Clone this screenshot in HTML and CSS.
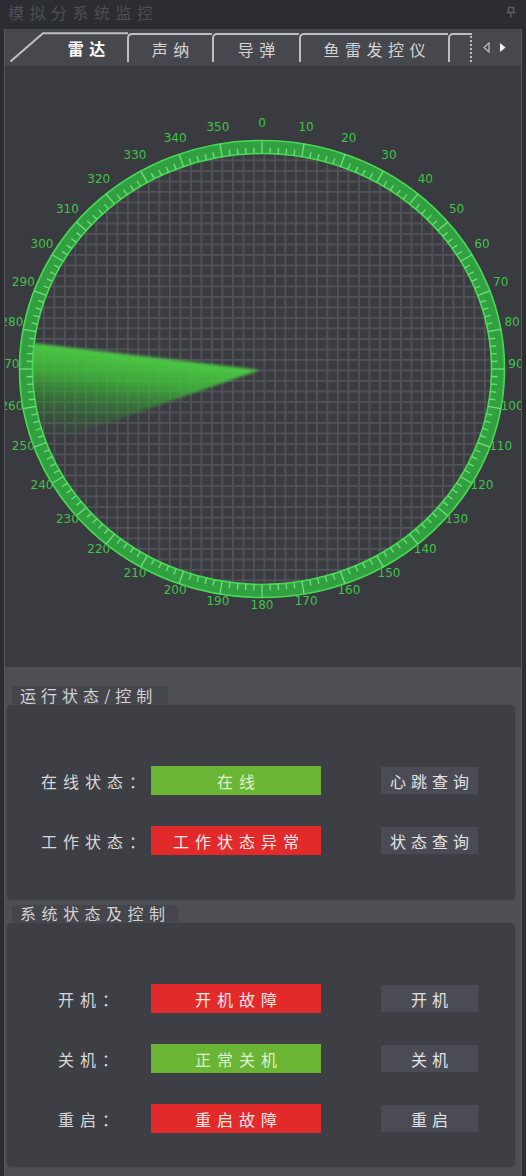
FILE: index.html
```html
<!DOCTYPE html>
<html lang="zh-CN">
<head>
<meta charset="utf-8">
<title>模拟分系统监控</title>
<link rel="stylesheet" href="styles.css">
</head>
<body>
<div class="window">
  <div class="titlebar">
    <span class="title">模拟分系统监控</span>
    <svg class="pin" width="10" height="12" viewBox="0 0 10 12"><path d="M2.5 1.5h5v5h-5z M0.5 6.5h9 M5 6.5v5" fill="none" stroke="#5c5e64" stroke-width="1.4"/></svg>
  </div>
  <div class="frame">
    <div class="tabbar">
      <div class="tab tab-first">
        <svg class="tab-shape" width="119" height="30" viewBox="0 0 119 30"><path d="M0.5 29.5 L33 1.2 H118" fill="none" stroke="#bdbec1" stroke-width="2"/></svg>
        <span class="tab-text">雷达</span>
      </div>
      <div class="tab tab-2"><span class="tab-text">声纳</span></div>
      <div class="tab tab-3"><span class="tab-text">导弹</span></div>
      <div class="tab tab-4"><span class="tab-text">鱼雷发控仪</span></div>
      <div class="tab tab-5"></div>
      <div class="tab-arrows">
        <svg width="7" height="11" viewBox="0 0 7 11"><path d="M6 1 L1 5.5 L6 10 Z" fill="none" stroke="#b9babd" stroke-width="1.3"/></svg>
        <svg width="7" height="11" viewBox="0 0 7 11"><path d="M1 1 L6.5 5.5 L1 10 Z" fill="#f2f2f2"/></svg>
      </div>
    </div>
    <div class="radar">
      <svg class="radar-svg" width="516" height="601" viewBox="5 66 516 601">
        <defs>
          <pattern id="grid" width="10.5" height="10.5" x="1" y="2" patternUnits="userSpaceOnUse">
            <rect width="10.5" height="10.5" fill="#3b3c42"/>
            <path d="M0 0.8 H10.5 M0.8 0 V10.5" stroke="#525359" stroke-width="1.8"/>
          </pattern>
          <linearGradient id="sweep" gradientUnits="userSpaceOnUse" x1="100" y1="350" x2="89" y2="440">
            <stop offset="0" stop-color="#4dd044" stop-opacity="0.95"/>
            <stop offset="0.3" stop-color="#40c03a" stop-opacity="0.8"/>
            <stop offset="0.65" stop-color="#30a02e" stop-opacity="0.4"/>
            <stop offset="1" stop-color="#2a8f2a" stop-opacity="0"/>
          </linearGradient>
          <filter id="soft" x="-10%" y="-20%" width="120%" height="140%">
            <feGaussianBlur stdDeviation="1.6"/>
          </filter>
        </defs>
        <rect x="5" y="66" width="516" height="601" fill="#3a3b40"/>
        <ellipse cx="262" cy="369" rx="229" ry="215" fill="url(#grid)"/>
        <path d="M260 370 L33 343 A229 215 0 0 0 44 445 Z" fill="url(#sweep)" filter="url(#soft)"/>
        <ellipse cx="262" cy="369" rx="236" ry="222" fill="none" stroke="#31a040" stroke-width="14"/>
        <ellipse cx="262" cy="369" rx="242.5" ry="228.5" fill="none" stroke="#48d854" stroke-width="1.6"/>
        <ellipse cx="262" cy="369" rx="229.5" ry="215.5" fill="none" stroke="#48d854" stroke-width="1.6"/>
        <g id="ticks" stroke="#74de7c" stroke-width="1.3"></g>
        <g id="labels" class="radar-labels"></g>
      </svg>
    </div>
    <div class="controls">
      <section class="group">
        <div class="group-title">运行状态/控制</div>
        <div class="group-body">
          <div class="row">
            <span class="label">在线状态：</span>
            <span class="status ok">在线</span>
            <span class="btn">心跳查询</span>
          </div>
          <div class="row">
            <span class="label">工作状态：</span>
            <span class="status bad">工作状态异常</span>
            <span class="btn">状态查询</span>
          </div>
        </div>
      </section>
      <section class="group group-2">
        <div class="group-title wide">系统状态及控制</div>
        <div class="group-body body-2">
          <div class="row">
            <span class="label short">开机：</span>
            <span class="status bad">开机故障</span>
            <span class="btn">开机</span>
          </div>
          <div class="row">
            <span class="label short">关机：</span>
            <span class="status ok">正常关机</span>
            <span class="btn">关机</span>
          </div>
          <div class="row">
            <span class="label short">重启：</span>
            <span class="status bad">重启故障</span>
            <span class="btn">重启</span>
          </div>
        </div>
      </section>
    </div>
  </div>
</div>
<script src="script.js"></script>
</body>
</html>
```
FILE: styles.css
```css
* { box-sizing: border-box; }
html, body { margin: 0; padding: 0; }
body {
  width: 526px;
  height: 1176px;
  overflow: hidden;
  background: #2c2d31;
  font-family: "Noto Sans CJK SC", "Noto Sans", sans-serif;
}
.window {
  width: 526px;
  height: 1176px;
  display: flex;
  flex-direction: column;
}
.titlebar {
  height: 29px;
  flex: none;
  display: flex;
  align-items: center;
  justify-content: space-between;
  padding: 0 10px 6px 8px;
}
.title {
  color: #4d4f56;
  font-size: 16px;
  line-height: 1;
  letter-spacing: 5.5px;
}
.pin { display: block; }
.frame {
  flex: 1;
  margin: 0 4px;
  border-left: 1px solid #57585d;
  border-right: 1px solid #57585d;
  background: #3a3b40;
  display: flex;
  flex-direction: column;
}
.tabbar {
  height: 37px;
  flex: none;
  background: #47484e;
  display: flex;
  align-items: flex-start;
  padding: 4px 0 0 5px;
}
.tab {
  height: 29px;
  display: flex;
  align-items: center;
  justify-content: center;
  border-top: 2px solid #bdbec1;
  border-left: 2px solid #bdbec1;
  border-top-left-radius: 5px;
  color: #d4d4d6;
  font-size: 16px;
  line-height: 1;
}
.tab-text {
  letter-spacing: 5.5px;
  padding-left: 5.5px;
}
.tab-first {
  width: 117px;
  border: none;
  border-radius: 0;
  position: relative;
  padding-left: 36px;
  color: #ffffff;
  font-weight: bold;
}
.tab-shape {
  position: absolute;
  left: 0;
  top: -1px;
}
.tab-first .tab-text { position: relative; }
.tab-2 { width: 85px; }
.tab-3 { width: 87px; }
.tab-4 { width: 149px; }
.tab-5 {
  width: 24px;
  border-right: 2px dotted #bdbec1;
}
.tab-arrows {
  height: 29px;
  display: flex;
  align-items: center;
  gap: 9px;
  margin-left: 11px;
}
.tab-arrows svg { display: block; }
.radar {
  height: 601px;
  flex: none;
}
.radar-svg { display: block; }
.radar-labels {
  font-family: "DejaVu Sans", sans-serif;
  font-size: 12px;
  fill: #3ec447;
}
.controls {
  flex: 1;
  background: #4e4f55;
  padding: 19px 5px 8px 1px;
  display: flex;
  flex-direction: column;
}
.group { display: flex; flex-direction: column; }
.group-2 { margin-top: 4px; flex: 1; }
.group-title {
  margin-left: 6px;
  width: 156px;
  height: 18px;
  background: #45464c;
  border-radius: 4px 4px 0 0;
  color: #d3d3d5;
  font-size: 16px;
  line-height: 18px;
  letter-spacing: 5px;
  padding-left: 8px;
  white-space: nowrap;
}
.group-title.wide {
  width: 166px;
  height: 17px;
  line-height: 17px;
  letter-spacing: 5.5px;
}
.group-body {
  height: 197px;
  background: #3e3f45;
  border: 1px solid #4a4b52;
  border-radius: 6px;
  padding-top: 61px;
  display: flex;
  flex-direction: column;
  gap: 31px;
}
.group-body.body-2 {
  height: auto;
  flex: 1;
  gap: 31px;
}
.row {
  height: 29px;
  display: flex;
  align-items: center;
}
.label {
  width: 144px;
  text-align: right;
  color: #d8d8da;
  font-size: 16px;
  line-height: 1;
  letter-spacing: 6px;
}
.label.short { padding-right: 27px; }
.status {
  width: 170px;
  height: 29px;
  display: flex;
  align-items: center;
  justify-content: center;
  font-size: 16px;
  line-height: 1;
  letter-spacing: 6px;
  padding-left: 6px;
}
.status.ok {
  background: #6ab634;
  color: #dff0d2;
}
.status.bad {
  background: #e32a2a;
  color: #fbe9e9;
}
.btn {
  margin-left: 60px;
  width: 97px;
  height: 27px;
  background: #4a4b55;
  color: #e2e2e4;
  display: flex;
  align-items: center;
  justify-content: center;
  font-size: 16px;
  line-height: 1;
  letter-spacing: 5px;
  padding-left: 5px;
}
```
FILE: script.js
```js
(function () {
  var NS = "http://www.w3.org/2000/svg";
  var cx = 262, cy = 369;
  var ticks = document.getElementById("ticks");
  var labels = document.getElementById("labels");
  for (var d = 0; d < 360; d += 2) {
    var t = d * Math.PI / 180, s = Math.sin(t), c = Math.cos(t);
    var major = d % 10 === 0;
    var ix = 229.5, iy = 215.5;
    var ox = major ? 242.5 : 235.5, oy = major ? 228.5 : 221.5;
    var l = document.createElementNS(NS, "line");
    l.setAttribute("x1", (cx + ix * s).toFixed(2));
    l.setAttribute("y1", (cy - iy * c).toFixed(2));
    l.setAttribute("x2", (cx + ox * s).toFixed(2));
    l.setAttribute("y2", (cy - oy * c).toFixed(2));
    ticks.appendChild(l);
  }
  for (var a = 0; a < 360; a += 10) {
    var r = a * Math.PI / 180;
    var tx = document.createElementNS(NS, "text");
    tx.setAttribute("x", (262 + 254 * Math.sin(r)).toFixed(2));
    tx.setAttribute("y", (364 - 241 * Math.cos(r)).toFixed(2));
    tx.setAttribute("text-anchor", "middle");
    tx.setAttribute("dominant-baseline", "central");
    tx.textContent = String(a);
    labels.appendChild(tx);
  }
})();
```
